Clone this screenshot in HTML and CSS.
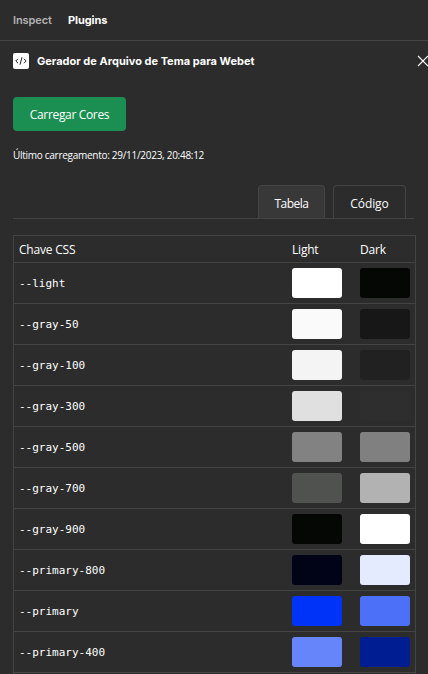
FILE: index.html
```html
<!DOCTYPE html>
<html lang="pt-BR">
<head>
<meta charset="utf-8">
<title>Gerador de Arquivo de Tema para Webet</title>
<link rel="stylesheet" href="styles.css">
</head>
<body>
<nav class="topbar"><span class="topbar-item inspect">Inspect</span><span class="topbar-item active">Plugins</span></nav>
<header class="plugin-header">
  <svg class="plugin-icon" width="16" height="16" viewBox="0 0 16 16"><rect width="16" height="16" rx="2" fill="#fff"/><path d="M5 5.8 2.8 8 5 10.2M11 5.8 13.2 8 11 10.2M9 4.3 7 11.7" fill="none" stroke="#222" stroke-width="1"/></svg>
  <h1 class="plugin-title">Gerador de Arquivo de Tema para Webet</h1>
  <svg class="close" width="11" height="12" viewBox="0 0 11 12"><path d="M1 1 11 11M11 1 1 11" stroke="#fff" stroke-width="1.1"/></svg>
</header>
<main class="content">
  <button class="load">Carregar Cores</button>
  <p class="status">Último carregamento: 29/11/2023, 20:48:12</p>
  <div class="tabs"><div class="tab selected"><span class="tabela">Tabela</span></div><div class="tab code"><span class="codigo">Código</span></div></div>
  <div class="table">
    <div class="row head"><span class="chave">Chave CSS</span><span class="light">Light</span><span class="dark">Dark</span></div>
    <div class="row"><code>--light</code><i class="swatch white"></i><i class="swatch black"></i></div>
    <div class="row"><code>--gray-50</code><i class="swatch l50"></i><i class="swatch d50"></i></div>
    <div class="row"><code>--gray-100</code><i class="swatch l100"></i><i class="swatch d100"></i></div>
    <div class="row"><code>--gray-300</code><i class="swatch l300"></i><i class="swatch d300"></i></div>
    <div class="row"><code>--gray-500</code><i class="swatch l500"></i><i class="swatch d500"></i></div>
    <div class="row"><code>--gray-700</code><i class="swatch l700"></i><i class="swatch d700"></i></div>
    <div class="row"><code>--gray-900</code><i class="swatch black"></i><i class="swatch white"></i></div>
    <div class="row"><code>--primary-800</code><i class="swatch lp800"></i><i class="swatch dp800"></i></div>
    <div class="row"><code>--primary</code><i class="swatch lp"></i><i class="swatch dp"></i></div>
    <div class="row"><code>--primary-400</code><i class="swatch lp400"></i><i class="swatch dp400"></i></div>
  </div>
</main>
</body>
</html>
```

FILE: styles.css
```css
* { box-sizing: border-box; }
html, body { height: 100%; overflow: hidden; }
body { margin: 0; background: #2c2c2c; color: #fff; font: 12px/16px "Open Sans", "Noto Sans", sans-serif; }
.topbar { display: flex; gap: 16px; height: 41px; padding: 12px 13px; border-bottom: 1px solid #444; font: 600 11px/16px Inter, sans-serif; white-space: nowrap; }
.inspect { color: #b3b3b3; width: 39px; letter-spacing: -.08px; }
.active { font-weight: 700; letter-spacing: -.1px; }
.plugin-header { display: flex; align-items: center; height: 40px; padding-left: 13px; white-space: nowrap; }
.plugin-icon { flex: none; }
.plugin-title { flex: none; width: 380px; margin: 0 0 0 8px; font: 700 11px/16px Inter, sans-serif; letter-spacing: .01px; }
.close { flex: none; }
.content { padding: 16px 12px 0 13px; }
.load { display: block; width: 113px; height: 34px; padding: 2px 0 0; border: 0; border-radius: 4px; background: #1b8f52; color: #fff; font: inherit; white-space: nowrap; letter-spacing: -.34px; }
.status { margin: 16px 0 0; font-size: 10px; line-height: 16px; letter-spacing: -.28px; white-space: nowrap; }
.tabs { display: flex; justify-content: flex-end; gap: 8px; width: 401px; height: 34px; margin-top: 22px; padding-right: 8px; border-bottom: 1px solid #444; }
.tab { display: flex; justify-content: center; align-items: center; width: 67px; height: 33px; padding-top: 3px; border: 1px solid #444; border-bottom: 0; border-radius: 4px 4px 0 0; letter-spacing: -.5px; }
.code { width: 73px; letter-spacing: -.1px; }
.selected { background: #383838; }
.table { width: 403px; height: 439px; margin-top: 16px; border: 1px solid #444; border-bottom: 0; }
.row { display: grid; grid-template-columns: 255px 50px 50px; column-gap: 18px; height: 41px; align-items: center; padding-left: 5px; border-bottom: 1px solid #444; }
.head { height: 27px; padding-top: 2px; letter-spacing: -.2px; }
.row code { padding-top: 2px; font: 11px/16px "DejaVu Sans Mono", monospace; }
.swatch { display: block; width: 50px; height: 30px; border-radius: 3px; }
.white { background: #fff; }
.black { background: #040703; }
.l50 { background: #fafafa; }
.d50 { background: #171717; }
.l100 { background: #f4f4f4; }
.d100 { background: #212121; }
.l300 { background: #e0e0e0; }
.d300 { background: #2e2e2e; }
.l500 { background: #828282; }
.d500 { background: #808080; }
.l700 { background: #4f524e; }
.d700 { background: #b2b2b2; }
.lp800 { background: #000416; }
.dp800 { background: #e5ebff; }
.lp { background: #0033f8; }
.dp { background: #4c71f8; }
.lp400 { background: #6685fa; }
.dp400 { background: #001d91; }
```
